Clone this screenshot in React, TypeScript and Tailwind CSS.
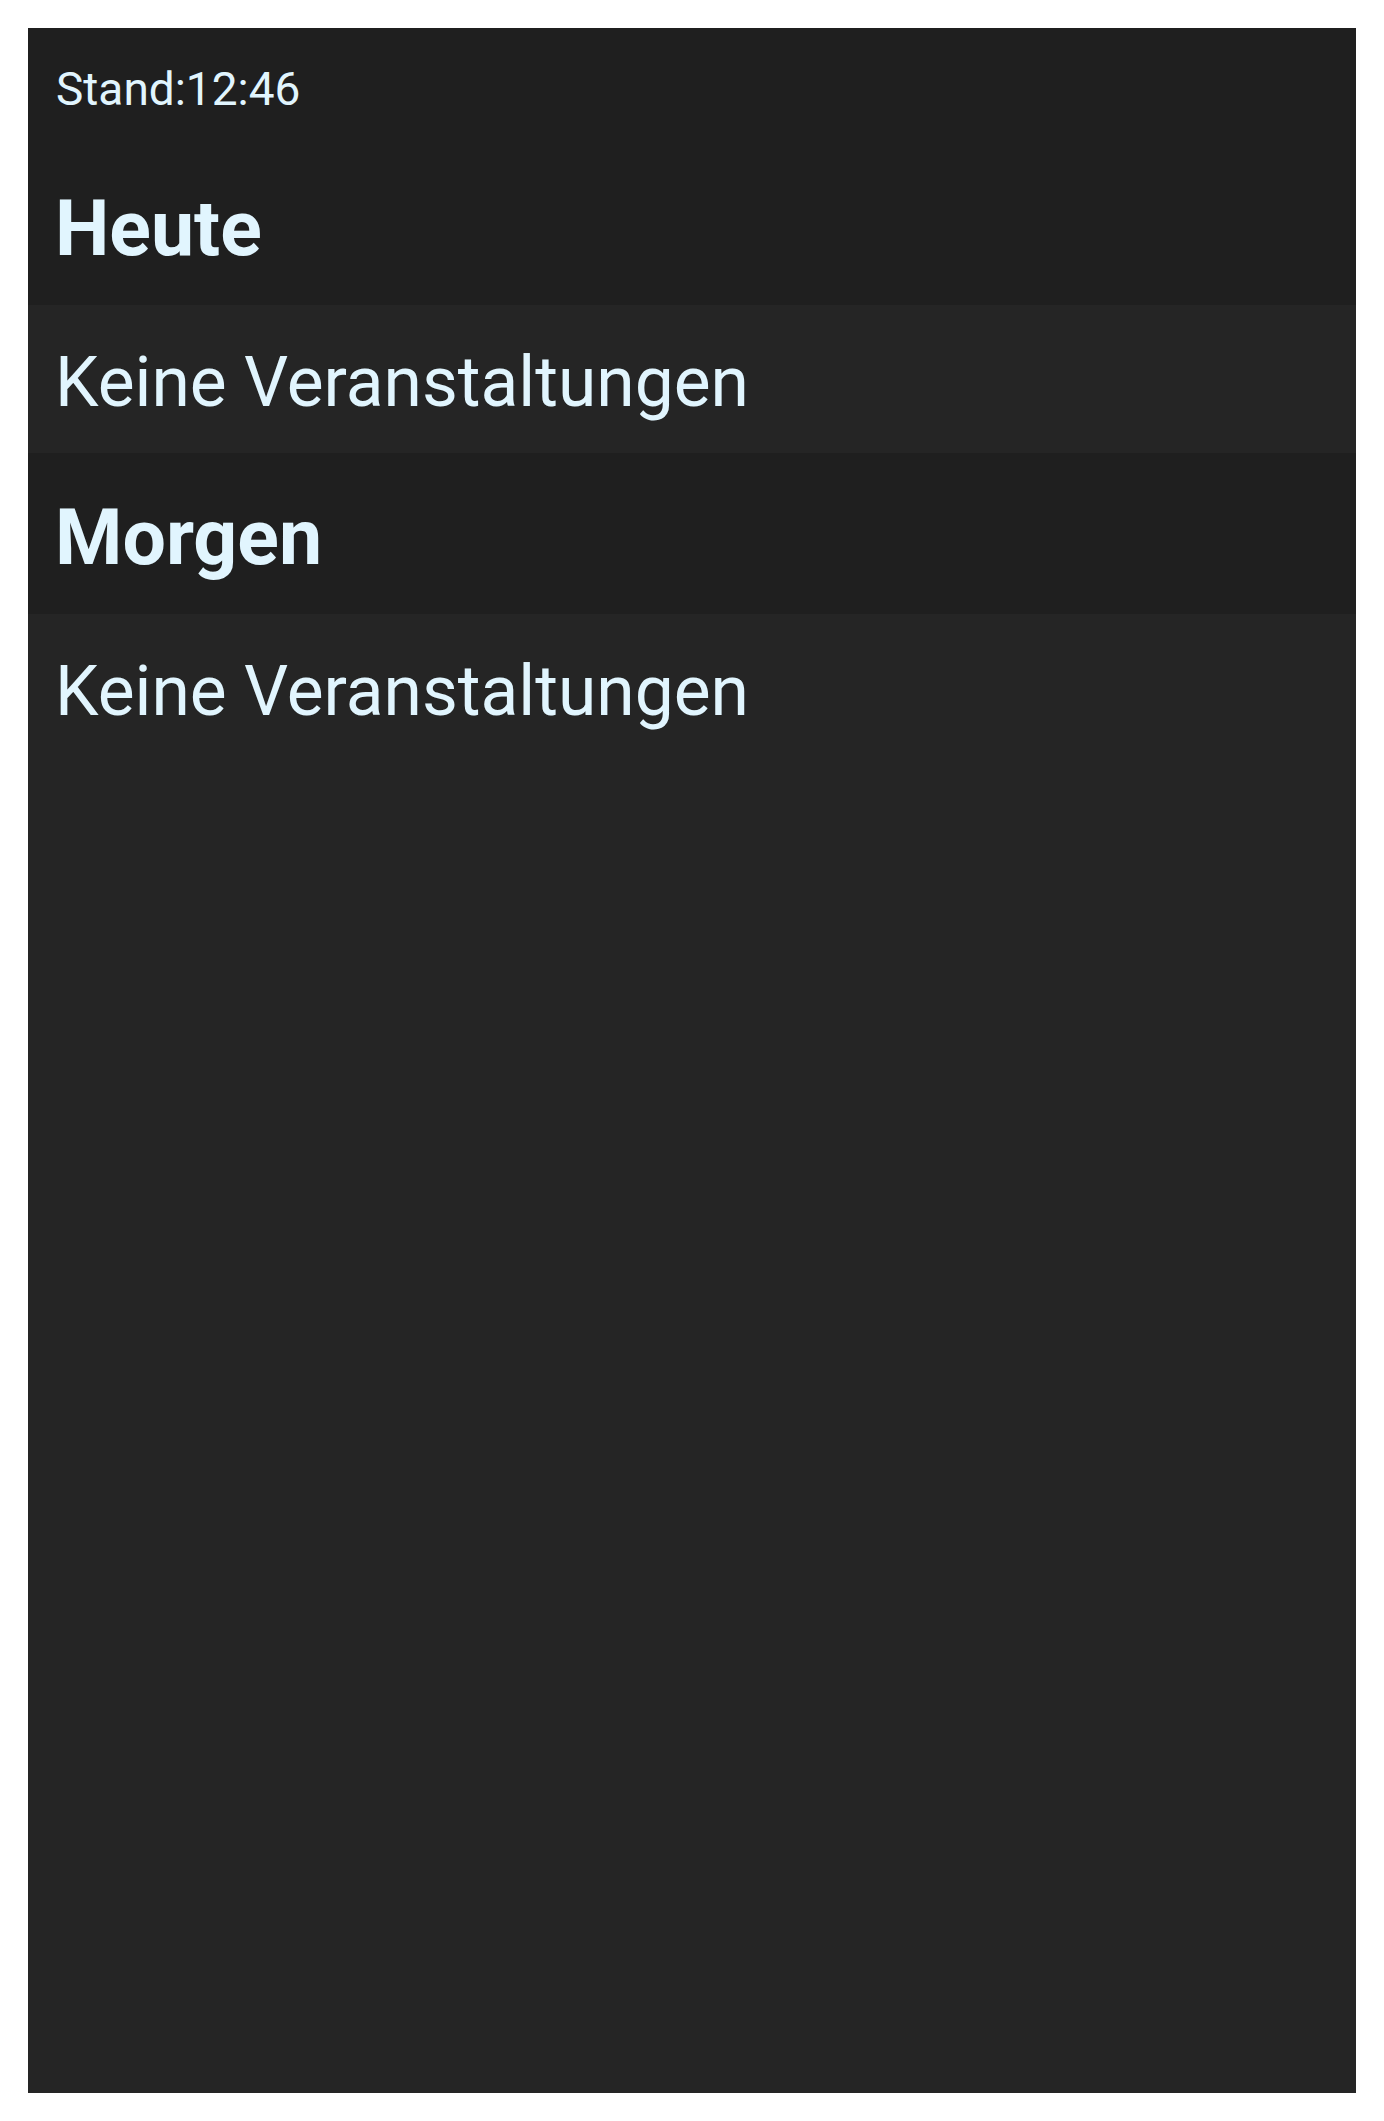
const Section = ({ title, first }: { title: string; first?: boolean }) => {
  return (
    <>
      <div className={`bg-[#1f1f1f] px-[27px] pb-[31px] ${first ? "pt-[68px]" : "pt-[40px]"}`}>
        <h2 className="text-[77px] leading-[normal] font-bold">{title}</h2>
      </div>
      <div className="bg-[#252525] px-[27px] pt-[37px] pb-[30px]">
        <p className="text-[69.5px] leading-[normal]">Keine Veranstaltungen</p>
      </div>
    </>
  );
};

export default function App() {
  return (
    <div className="bg-white p-[28px]">
      <div
        className="flex h-[2065px] flex-col bg-[#252525] text-[#e1f5fe]"
        style={{ fontFamily: "Roboto, 'Noto Sans', sans-serif" }}
      >
        <div className="bg-[#1f1f1f] px-[28px] pt-[34px]">
          <p className="text-[46px] leading-[normal]">Stand:12:46</p>
        </div>
        <Section title="Heute" first />
        <Section title="Morgen" />
      </div>
    </div>
  );
}
